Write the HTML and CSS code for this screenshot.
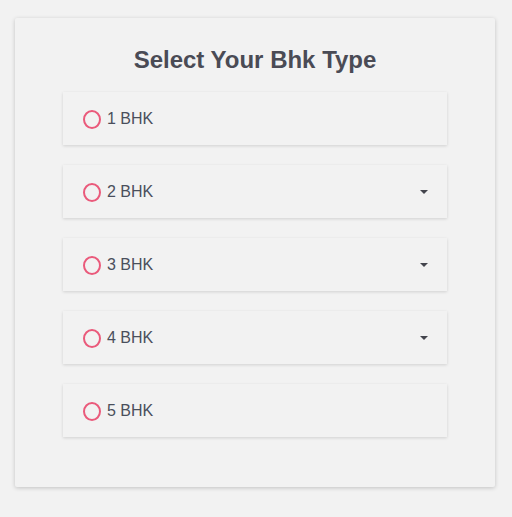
FILE: index.html
```html
<!DOCTYPE html>
<html lang="en">
<head>
    <meta charset="UTF-8">
    <meta name="viewport" content="width=device-width, initial-scale=1.0">
    <title>Select Your Bhk Type</title>
    <link rel="stylesheet" href="styles.css">
</head>
<body>
    <div class="card">
        <h1>Select Your Bhk Type</h1>

        <div class="options">
            <div class="option">
                <span class="radio"></span>
                <span class="label">1 BHK</span>
            </div>
            <div class="option">
                <span class="radio"></span>
                <span class="label">2 BHK</span>
                <span class="caret"></span>
            </div>
            <div class="option">
                <span class="radio"></span>
                <span class="label">3 BHK</span>
                <span class="caret"></span>
            </div>
            <div class="option">
                <span class="radio"></span>
                <span class="label">4 BHK</span>
                <span class="caret"></span>
            </div>
            <div class="option">
                <span class="radio"></span>
                <span class="label">5 BHK</span>
            </div>
        </div>
    </div>
</body>
</html>
```

FILE: styles.css
```css
html {
    background-color: #f2f2f2;
}
body {
    font-family: 'Liberation Sans', Arial, sans-serif;
    margin: 0;
    padding: 18px 0 30px 15px;
    background-color: #f2f2f2;
    color: #4a4f5c;
}
.card {
    width: 480px;
    box-sizing: border-box;
    padding: 28px 0 50px;
    background: #f2f2f2;
    box-shadow: 0 1px 4px rgba(0, 0, 0, 0.2);
    border-radius: 2px;
}
h1 {
    margin: 0 0 19px;
    text-align: center;
    font-size: 24px;
    line-height: 27px;
    font-weight: bold;
    color: #4a4b55;
}
.options {
    display: flex;
    flex-direction: column;
    gap: 20px;
    width: 384px;
    margin: 0 auto;
}
.option {
    display: flex;
    align-items: center;
    height: 53px;
    padding: 0 19px 0 20px;
    background: #f2f2f2;
    box-shadow: 0 1px 3px rgba(0, 0, 0, 0.14);
    cursor: pointer;
}
.radio {
    width: 14px;
    height: 15px;
    border: 2px solid #ea5a7b;
    border-radius: 50%;
    margin-top: 2px;
}
.label {
    margin-left: 6px;
    font-size: 16px;
    color: #4a4f5c;
}
.caret {
    margin-left: auto;
    margin-top: 1px;
    width: 0;
    height: 0;
    border-left: 4px solid transparent;
    border-right: 4px solid transparent;
    border-top: 4px solid #44454d;
}
```
